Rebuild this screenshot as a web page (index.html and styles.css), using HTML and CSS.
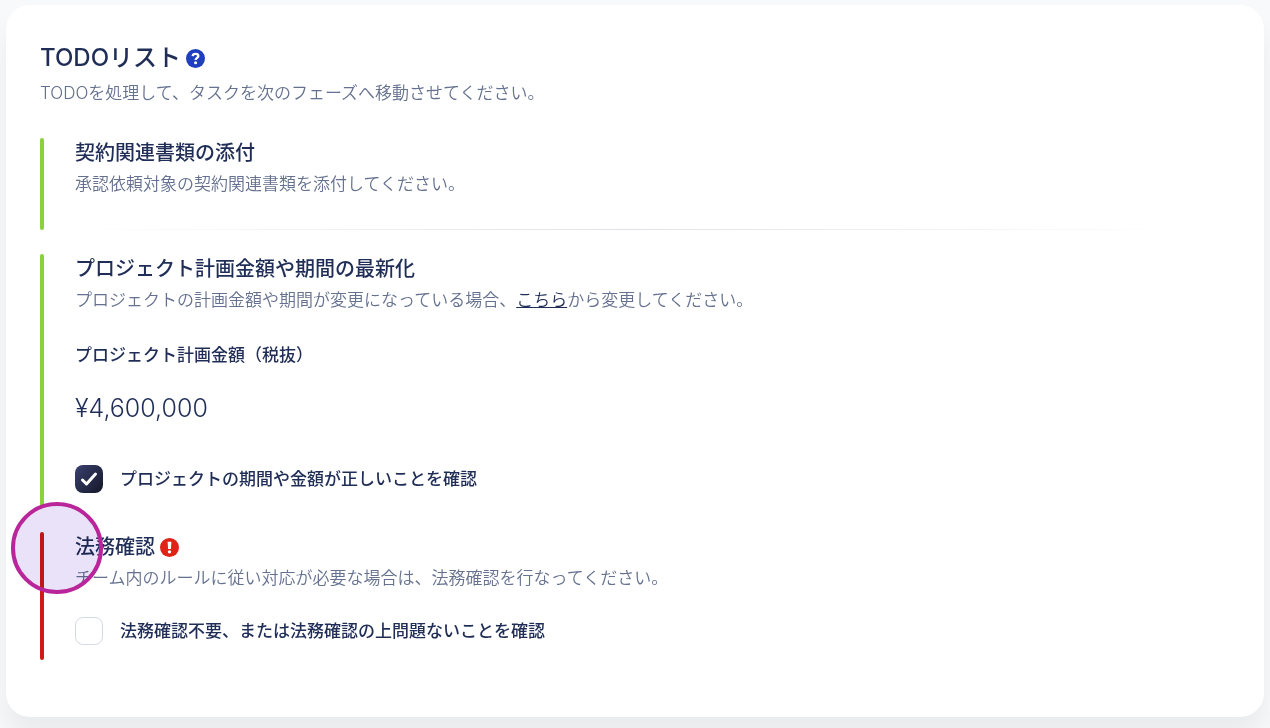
FILE: index.html
```html
<!DOCTYPE html>
<html lang="ja">
<head>
    <meta charset="UTF-8">
    <meta name="viewport" content="width=device-width, initial-scale=1.0">
    <title>TODOリスト</title>
    <link rel="stylesheet" href="styles.css">
</head>
<body>
    <main class="card">
        <header class="card-header">
            <h1>TODOリスト
                <svg class="icon" viewBox="0 0 20 20" role="img" aria-label="ヘルプ">
                    <circle cx="10" cy="10" r="10" fill="#1f3fbf"/>
                    <path d="M7 7.6c.2-1.7 1.4-2.5 3-2.5 1.8 0 3 .9 3 2.3 0 1.9-2.8 2-2.8 4.1" fill="none" stroke="#fff" stroke-width="2.5"/>
                    <circle cx="10.1" cy="14.5" r="1.6" fill="#fff"/>
                </svg>
            </h1>
            <p>TODOを処理して、タスクを次のフェーズへ移動させてください。</p>
        </header>

        <ul class="todo-list">
            <li class="todo done">
                <h2>契約関連書類の添付</h2>
                <p>承認依頼対象の契約関連書類を添付してください。</p>
                <hr>
            </li>
            <li class="todo done todo-plan">
                <h2>プロジェクト計画金額や期間の最新化</h2>
                <p>プロジェクトの計画金額や期間が変更になっている場合、<a href="#">こちら</a>から変更してください。</p>
                <h3>プロジェクト計画金額（税抜）</h3>
                <div class="amount">¥4,600,000</div>
                <label class="check">
                    <input type="checkbox" checked>
                    <span>プロジェクトの期間や金額が正しいことを確認</span>
                </label>
            </li>
            <li class="todo pending">
                <h2>法務確認
                    <svg class="icon" viewBox="0 0 20 20" role="img" aria-label="未完了">
                        <circle cx="10" cy="10" r="10" fill="#df2317"/>
                        <path d="M8 4h4l-.5 7.6h-3z" fill="#fff"/>
                        <circle cx="10" cy="14.6" r="1.8" fill="#fff"/>
                    </svg>
                </h2>
                <p>チーム内のルールに従い対応が必要な場合は、法務確認を行なってください。</p>
                <label class="check">
                    <input type="checkbox">
                    <span>法務確認不要、または法務確認の上問題ないことを確認</span>
                </label>
                <span class="pointer"></span>
            </li>
        </ul>
    </main>
</body>
</html>
```
FILE: styles.css
```css
*{
    box-sizing: border-box;
    margin: 0;
    padding: 0;
}
body{
    padding: 5px 6px 11px;
    background-color: #f8f9fa;
    color: #1f2d57;
    font-family: Inter, "Noto Sans CJK JP", sans-serif;
    font-size: 17px;
    line-height: 24px;
}
.card{
    padding: 37px 34px 57px;
    border-radius: 24px;
    background-color: #fff;
    box-shadow: 0 20px 27px rgba(0, 0, 0, 0.06);
}
h1, h2{
    display: flex;
    align-items: center;
    gap: 5px;
    font-weight: 500;
}
h1{
    font-size: 24px;
    line-height: 32px;
}
h2{
    font-size: 20px;
    line-height: 30px;
}
h3{
    margin-top: 27px;
    font-size: 17px;
    font-weight: 500;
}
p{
    color: #65718f;
    font-weight: 350;
    line-height: 32px;
}
.card-header p{
    margin-top: 3px;
}
.icon{
    width: 19px;
    height: 19px;
}
.todo-list{
    margin-top: 29px;
    list-style: none;
}
.todo{
    position: relative;
    padding-left: 35px;
}
.todo::before{
    content: "";
    position: absolute;
    left: 0;
    top: 0;
    bottom: 0;
    width: 4px;
    border-radius: 2px;
}
.done::before{
    background-color: #8dcf3f;
}
.pending::before{
    background-color: #d11a17;
}
.todo + .todo{
    margin-top: 24px;
}
.todo-plan, .pending{
    padding-bottom: 15px;
}
hr{
    width: 1100px;
    max-width: 100%;
    height: 1px;
    margin-top: 29px;
    border: 0;
    background: linear-gradient(90deg, transparent, #dfe2e6, transparent);
}
a{
    color: #1f2d57;
    text-decoration-thickness: 1px;
}
.amount{
    margin-top: 25px;
    font-size: 25px;
    font-weight: 300;
    line-height: 32px;
}
.check{
    display: flex;
    align-items: center;
    gap: 17px;
    font-weight: 500;
}
.todo-plan .check{
    margin-top: 41px;
}
.pending .check{
    margin-top: 23px;
}
.check input{
    appearance: none;
    width: 28px;
    height: 28px;
    border: 1px solid #d5dae1;
    border-radius: 8px;
}
.check input:checked{
    border: 0;
    background: url("data:image/svg+xml,%3Csvg xmlns='http://www.w3.org/2000/svg' viewBox='0 0 28 28'%3E%3Cpath d='M7.5 15l4 4 9-10' fill='none' stroke='white' stroke-width='3' stroke-linecap='round' stroke-linejoin='round'/%3E%3C/svg%3E"), linear-gradient(310deg, #141727, #3a416f);
}
/* click marker */
.pointer{
    position: absolute;
    top: -30px;
    left: -29px;
    width: 92px;
    height: 92px;
    border: 4px solid #b9269b;
    border-radius: 50%;
}
.pointer::before{
    content: "";
    display: block;
    height: 100%;
    border-radius: 50%;
    background-color: #e9e2f8;
    mix-blend-mode: multiply;
}
```
